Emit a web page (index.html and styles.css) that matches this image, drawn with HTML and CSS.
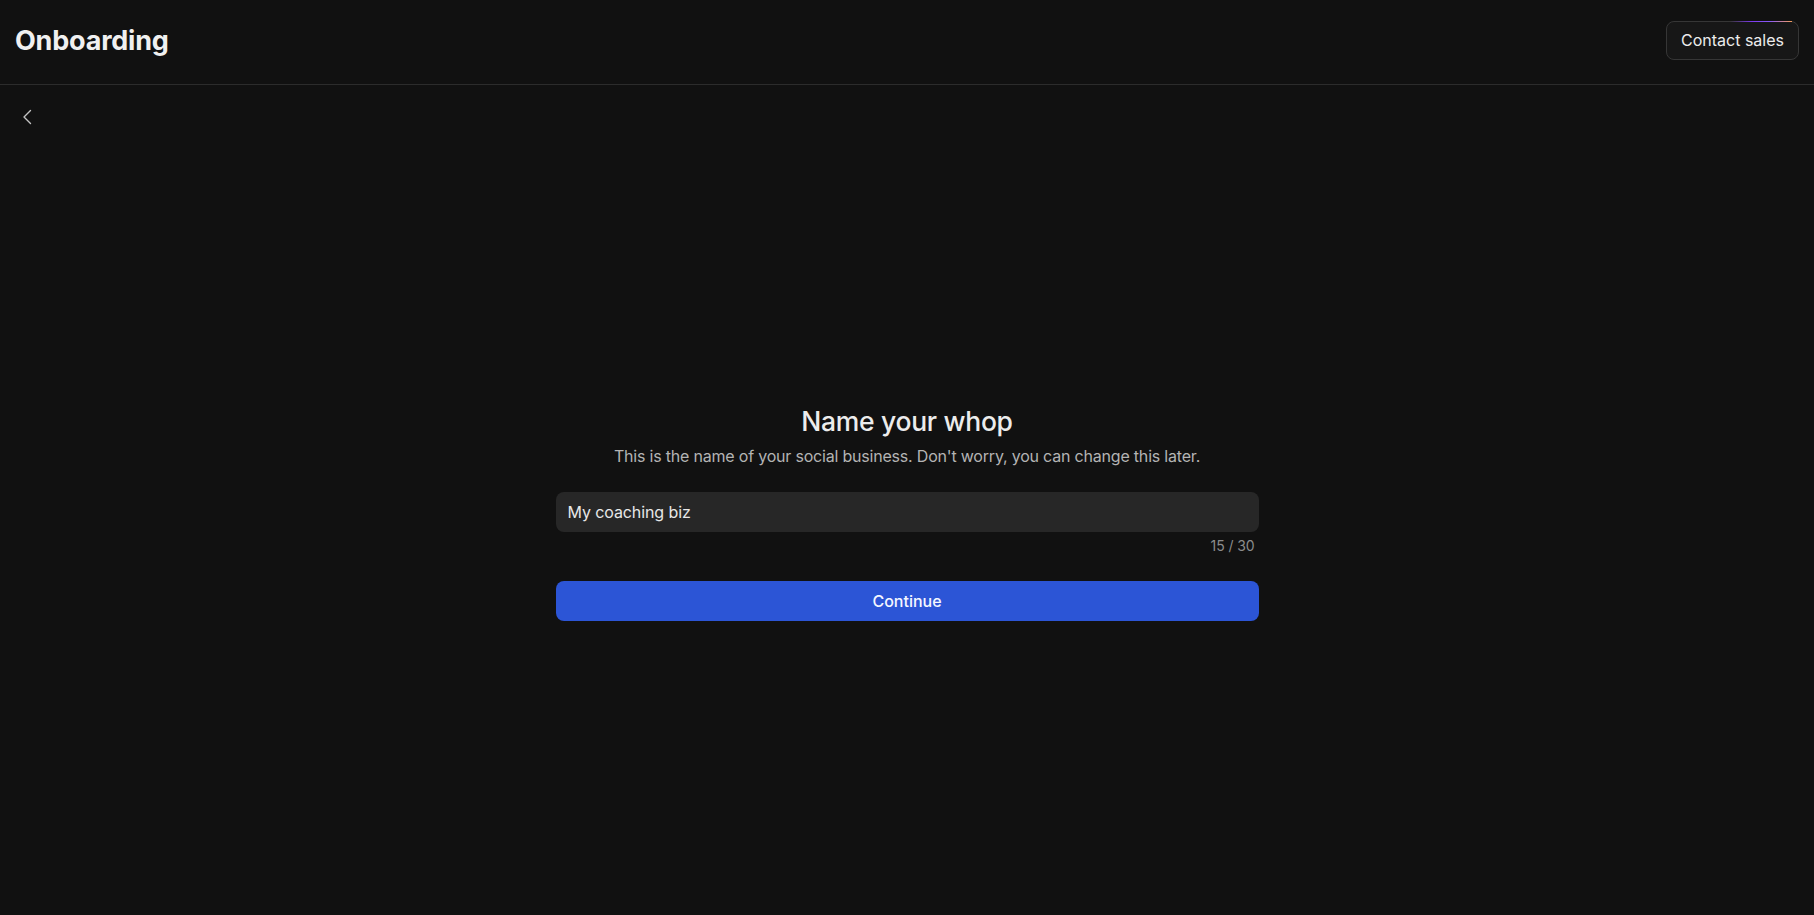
FILE: index.html
```html
<!DOCTYPE html>
<html lang="en">
<head>
<meta charset="utf-8">
<title>Onboarding</title>
<link rel="stylesheet" href="styles.css">
</head>
<body>
<div class="page">
  <header class="topbar">
    <h1 class="brand">Onboarding</h1>
    <button class="contact-btn" type="button">Contact sales</button>
  </header>
  <nav class="nav-row">
    <button class="back-btn" type="button" aria-label="Back">
      <svg width="10" height="16" viewBox="0 0 10 16" fill="none"><path d="M8.5 1.5 L2 8 L8.5 14.5" stroke="#c4c4c4" stroke-width="1.4" stroke-linecap="round" stroke-linejoin="round"/></svg>
    </button>
  </nav>
  <main class="stage">
    <section class="form">
      <h2 class="title">Name your whop</h2>
      <p class="subtitle">This is the name of your social business. Don't worry, you can change this later.</p>
      <div class="field">
        <input class="name-input" type="text" value="My coaching biz">
      </div>
      <div class="counter">15 / 30</div>
      <button class="continue-btn" type="button">Continue</button>
    </section>
  </main>
</div>
</body>
</html>
```

FILE: styles.css
```css
html, body {
  margin: 0;
  padding: 0;
  height: 100%;
  background: #111111;
  color: #ededed;
  font-family: Inter, "Noto Sans", "Liberation Sans", sans-serif;
}

.page {
  height: 100%;
  display: flex;
  flex-direction: column;
}

.topbar {
  height: 80px;
  flex: 0 0 auto;
  display: flex;
  align-items: center;
  justify-content: space-between;
  padding: 0 15px 4px;
  border-bottom: 1px solid #2c2c2c;
  box-sizing: content-box;
}

.brand {
  margin: 0;
  font-size: 27px;
  font-weight: 700;
  letter-spacing: -0.2px;
  color: #f0f0f0;
  line-height: 1;
}

.contact-btn {
  position: relative;
  font-family: inherit;
  font-size: 16px;
  line-height: 21px;
  color: #ececec;
  background: #171717;
  border: 1px solid #363636;
  border-radius: 8px;
  padding: 8px 14px;
  cursor: pointer;
}

.contact-btn::before {
  content: "";
  position: absolute;
  top: -1px;
  right: 6px;
  width: 62px;
  height: 1px;
  background: linear-gradient(90deg, rgba(124, 58, 237, 0) 0%, #7c3aed 35%, #8b5cf6 65%, #f59e5b 100%);
}

.nav-row {
  height: 50px;
  flex: 0 0 auto;
  display: flex;
  align-items: center;
  padding: 0 18px;
}

.back-btn {
  background: none;
  border: 0;
  padding: 4px;
  margin-top: 14px;
  display: flex;
  cursor: pointer;
}

.stage {
  flex: 1 1 auto;
  display: flex;
  align-items: center;
  justify-content: center;
  padding-bottom: 26px;
}

.form {
  width: 703px;
  display: flex;
  flex-direction: column;
  align-items: stretch;
}

.title {
  margin: 0;
  text-align: center;
  font-size: 26.5px;
  line-height: 36px;
  font-weight: 500;
  color: #ececec;
  letter-spacing: -0.3px;
}

.subtitle {
  margin: 5px 0 0;
  text-align: center;
  font-size: 16px;
  line-height: 24px;
  color: #b4b4b4;
  letter-spacing: -0.2px;
}

.field {
  margin-top: 24px;
}

.name-input {
  width: 100%;
  box-sizing: border-box;
  height: 40px;
  padding: 0 12px;
  border: 0;
  border-radius: 8px;
  background: #272727;
  color: #e8e8e8;
  font-family: inherit;
  font-size: 16px;
  letter-spacing: -0.1px;
  outline: none;
}

.counter {
  margin-top: 5px;
  text-align: right;
  padding-right: 4px;
  font-size: 14px;
  line-height: 18px;
  color: #8c8c8c;
  letter-spacing: -0.1px;
}

.continue-btn {
  margin-top: 26px;
  height: 40px;
  border: 0;
  border-radius: 8px;
  background: #2c55d6;
  color: #f5f7ff;
  font-family: inherit;
  font-size: 16px;
  font-weight: 500;
  cursor: pointer;
}
```
